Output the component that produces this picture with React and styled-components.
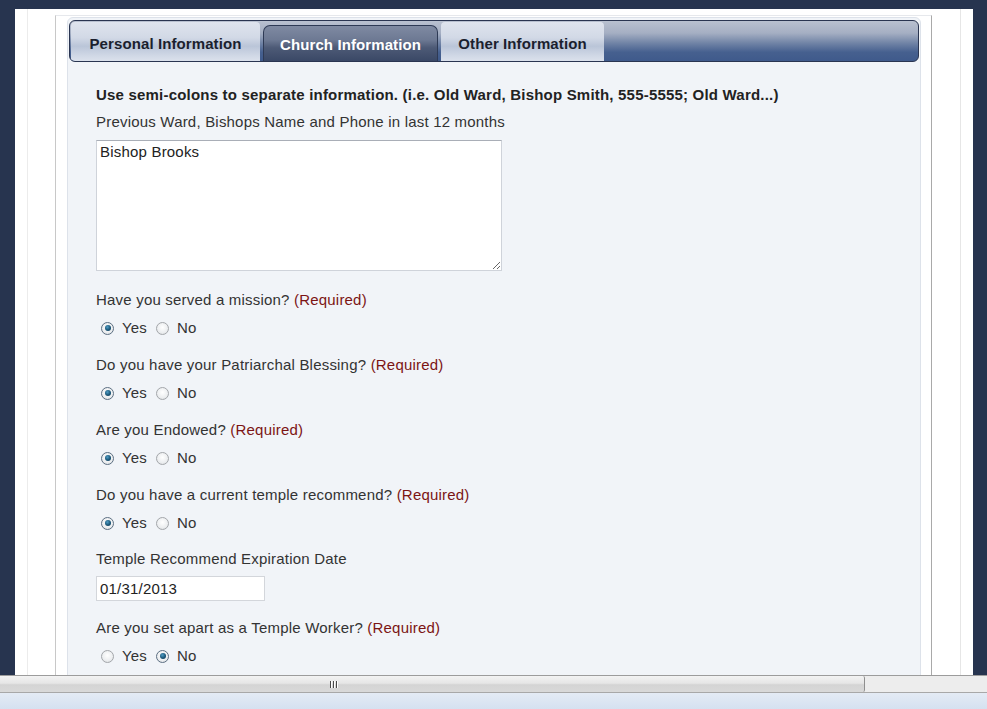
import React from "react";
import styled, { createGlobalStyle, css } from "styled-components";

const Global = createGlobalStyle`
  html, body { margin: 0; padding: 0; height: 100%; overflow: hidden; }
  body { font-family: "Liberation Sans", Arial, sans-serif; }
  #root { height: 100%; }
`;

const Screen = styled.div`
  height: 709px;
  display: flex;
  flex-direction: column;
`;

const Viewport = styled.div`
  height: 675px;
  overflow: hidden;
  background: #27344f;
  padding: 9px 14px 0 15px;
  box-sizing: border-box;
`;

const Page = styled.div`
  background: #ffffff;
  height: 100%;
  padding: 0 12px;
  display: flex;
`;

const Frame = styled.div`
  flex: 1;
  border-left: 1px solid #ececec;
  border-right: 1px solid #e6e6e6;
  padding: 0 28px 0 27px;
  display: flex;
`;

const Column = styled.div`
  flex: 1;
  margin-top: 6px;
  border-top: 1px solid #e6e8ec;
  border-left: 1px solid #c8c8c8;
  border-right: 1px solid #a9a9a9;
  padding: 1px 10px 0 11px;
`;

const Panel = styled.div`
  background: #f1f4f8;
  border: 1px solid #dde2ea;
  border-radius: 6px;
  padding: 2px 1px 40px;
  height: 800px;
`;

const TabBar = styled.div`
  height: 40px;
  border: 1px solid #2a3551;
  border-radius: 6px;
  background: linear-gradient(
    to bottom,
    #b9c1d0 0%,
    #a5afc3 30%,
    #7184a6 55%,
    #46608f 78%,
    #3f5a8b 100%
  );
  display: flex;
  align-items: flex-end;
  gap: 3px;
  padding-left: 1px;
  overflow: hidden;
`;

const Tab = styled.div`
  width: ${(p) => p.$width}px;
  height: 39px;
  padding-top: 4px;
  display: flex;
  align-items: center;
  justify-content: center;
  font-size: 15px;
  font-weight: bold;
  letter-spacing: 0.1px;
  color: #1b1f2e;
  box-sizing: border-box;
  white-space: nowrap;
  background: linear-gradient(
    to bottom,
    #dfe4ee 0%,
    #d2d9e6 40%,
    #bac5d8 62%,
    #cfd7e5 85%,
    #dbe1ec 100%
  );
  border-radius: 4px 4px 0 0;
  ${(p) =>
    p.$active &&
    css`
      height: 36px;
      padding-top: 2px;
      color: #ffffff;
      border: 1px solid #2e3a55;
      border-bottom: none;
      border-radius: 7px 7px 0 0;
      background: linear-gradient(
        to bottom,
        #7f8aa2 0%,
        #6d7993 40%,
        #4d5a76 62%,
        #3a4866 100%
      );
    `}
`;

const Content = styled.div`
  padding: 23px 27px 0;
  color: #333333;
  font-size: 15px;
  line-height: 20px;
  letter-spacing: 0.2px;
`;

const Heading = styled.div`
  font-weight: bold;
  color: #222222;
  margin-bottom: 7px;
`;

const Label = styled.div`
  margin-bottom: ${(p) => p.$gap ?? 8}px;
`;

const Required = styled.span`
  color: #7c1414;
`;

const Field = styled.div`
  margin-bottom: ${(p) => p.$gap ?? 17}px;
`;

const TextArea = styled.textarea`
  display: block;
  width: 406px;
  height: 131px;
  box-sizing: border-box;
  border: 1px solid #cfd3da;
  border-top-color: #a9aeb7;
  background: #ffffff;
  font-family: "Liberation Sans", Arial, sans-serif;
  font-size: 15px;
  letter-spacing: 0.2px;
  line-height: 18px;
  color: #222222;
  padding: 2px 3px;
  resize: both;
  outline: none;
`;

const TextInput = styled.input`
  display: block;
  width: 169px;
  height: 25px;
  box-sizing: border-box;
  border: 1px solid #d3d6db;
  background: #ffffff;
  font-family: "Liberation Sans", Arial, sans-serif;
  font-size: 15px;
  letter-spacing: 0.2px;
  color: #222222;
  padding: 0 3px;
  outline: none;
`;

const RadioRow = styled.div`
  display: flex;
  align-items: center;
  height: 20px;
  padding-left: 5px;
`;

const Option = styled.label`
  display: flex;
  align-items: center;
  gap: 8px;
  margin-right: 9px;
  color: #333333;
`;

const RadioDot = styled.span`
  width: 11px;
  height: 11px;
  border-radius: 50%;
  border: 1px solid #a3a6aa;
  background: radial-gradient(circle at 50% 40%, #ffffff 0%, #eceef0 60%, #d6d9dc 100%);
  display: inline-flex;
  align-items: center;
  justify-content: center;
  box-sizing: content-box;
  ${(p) =>
    p.$checked &&
    css`
      border-color: #5c6f82;
      &::after {
        content: "";
        width: 6px;
        height: 6px;
        border-radius: 50%;
        background: radial-gradient(circle at 40% 35%, #4f9cc4 0%, #1a5678 55%, #0f3954 100%);
      }
    `}
`;

const HScroll = styled.div`
  display: flex;
  border-top: 1px solid #9c9c9c;
  border-bottom: 1px solid #a8a8a8;
  background: #ededed;
  box-sizing: border-box;
  height: 18px;
`;

const Thumb = styled.div`
  width: 865px;
  border-right: 1px solid #8f8f8f;
  border-radius: 0 2px 2px 0;
  background: linear-gradient(to bottom, #f3f3f3 0%, #e6e6e6 45%, #d4d4d4 55%, #d9d9d9 100%);
  display: flex;
  align-items: center;
  justify-content: center;
  padding-right: 197px;
  box-sizing: border-box;
  gap: 2px;
`;

const GripLine = styled.span`
  width: 1px;
  height: 7px;
  background: #4a4a4a;
  box-shadow: 1px 0 0 #ffffff;
`;

const StatusBar = styled.div`
  flex: 1;
  background: linear-gradient(to bottom, #e4ebf5, #d5e1f0);
`;

function Radio({ checked, children }) {
  return (
    <Option>
      <RadioDot $checked={checked} />
      {children}
    </Option>
  );
}

function YesNo({ yes }) {
  return (
    <RadioRow>
      <Radio checked={yes}>Yes</Radio>
      <Radio checked={!yes}>No</Radio>
    </RadioRow>
  );
}

const questions = [
  { q: "Have you served a mission?", yes: true },
  { q: "Do you have your Patriarchal Blessing?", yes: true },
  { q: "Are you Endowed?", yes: true },
  { q: "Do you have a current temple recommend?", yes: true, gap: 16 },
];

const tabs = [
  { label: "Personal Information", width: 189 },
  { label: "Church Information", width: 175, active: true },
  { label: "Other Information", width: 163 },
];

export default function App() {
  return (
    <Screen>
      <Global />
      <Viewport>
        <Page>
          <Frame>
            <Column>
              <Panel>
                <TabBar>
                  {tabs.map((t) => (
                    <Tab key={t.label} $width={t.width} $active={t.active}>
                      {t.label}
                    </Tab>
                  ))}
                </TabBar>
                <Content>
                  <Heading>
                    Use semi-colons to separate information. (i.e. Old Ward, Bishop Smith, 555-5555; Old Ward...)
                  </Heading>
                  <Field $gap={19}>
                    <Label>Previous Ward, Bishops Name and Phone in last 12 months</Label>
                    <TextArea defaultValue="Bishop Brooks" />
                  </Field>
                  {questions.map((item) => (
                    <Field key={item.q} $gap={item.gap}>
                      <Label>
                        {item.q} <Required>(Required)</Required>
                      </Label>
                      <YesNo yes={item.yes} />
                    </Field>
                  ))}
                  <Field>
                    <Label $gap={7}>Temple Recommend Expiration Date</Label>
                    <TextInput defaultValue="01/31/2013" />
                  </Field>
                  <Field>
                    <Label>
                      Are you set apart as a Temple Worker? <Required>(Required)</Required>
                    </Label>
                    <YesNo yes={false} />
                  </Field>
                </Content>
              </Panel>
            </Column>
          </Frame>
        </Page>
      </Viewport>
      <HScroll>
        <Thumb>
          <GripLine />
          <GripLine />
          <GripLine />
        </Thumb>
      </HScroll>
      <StatusBar />
    </Screen>
  );
}
